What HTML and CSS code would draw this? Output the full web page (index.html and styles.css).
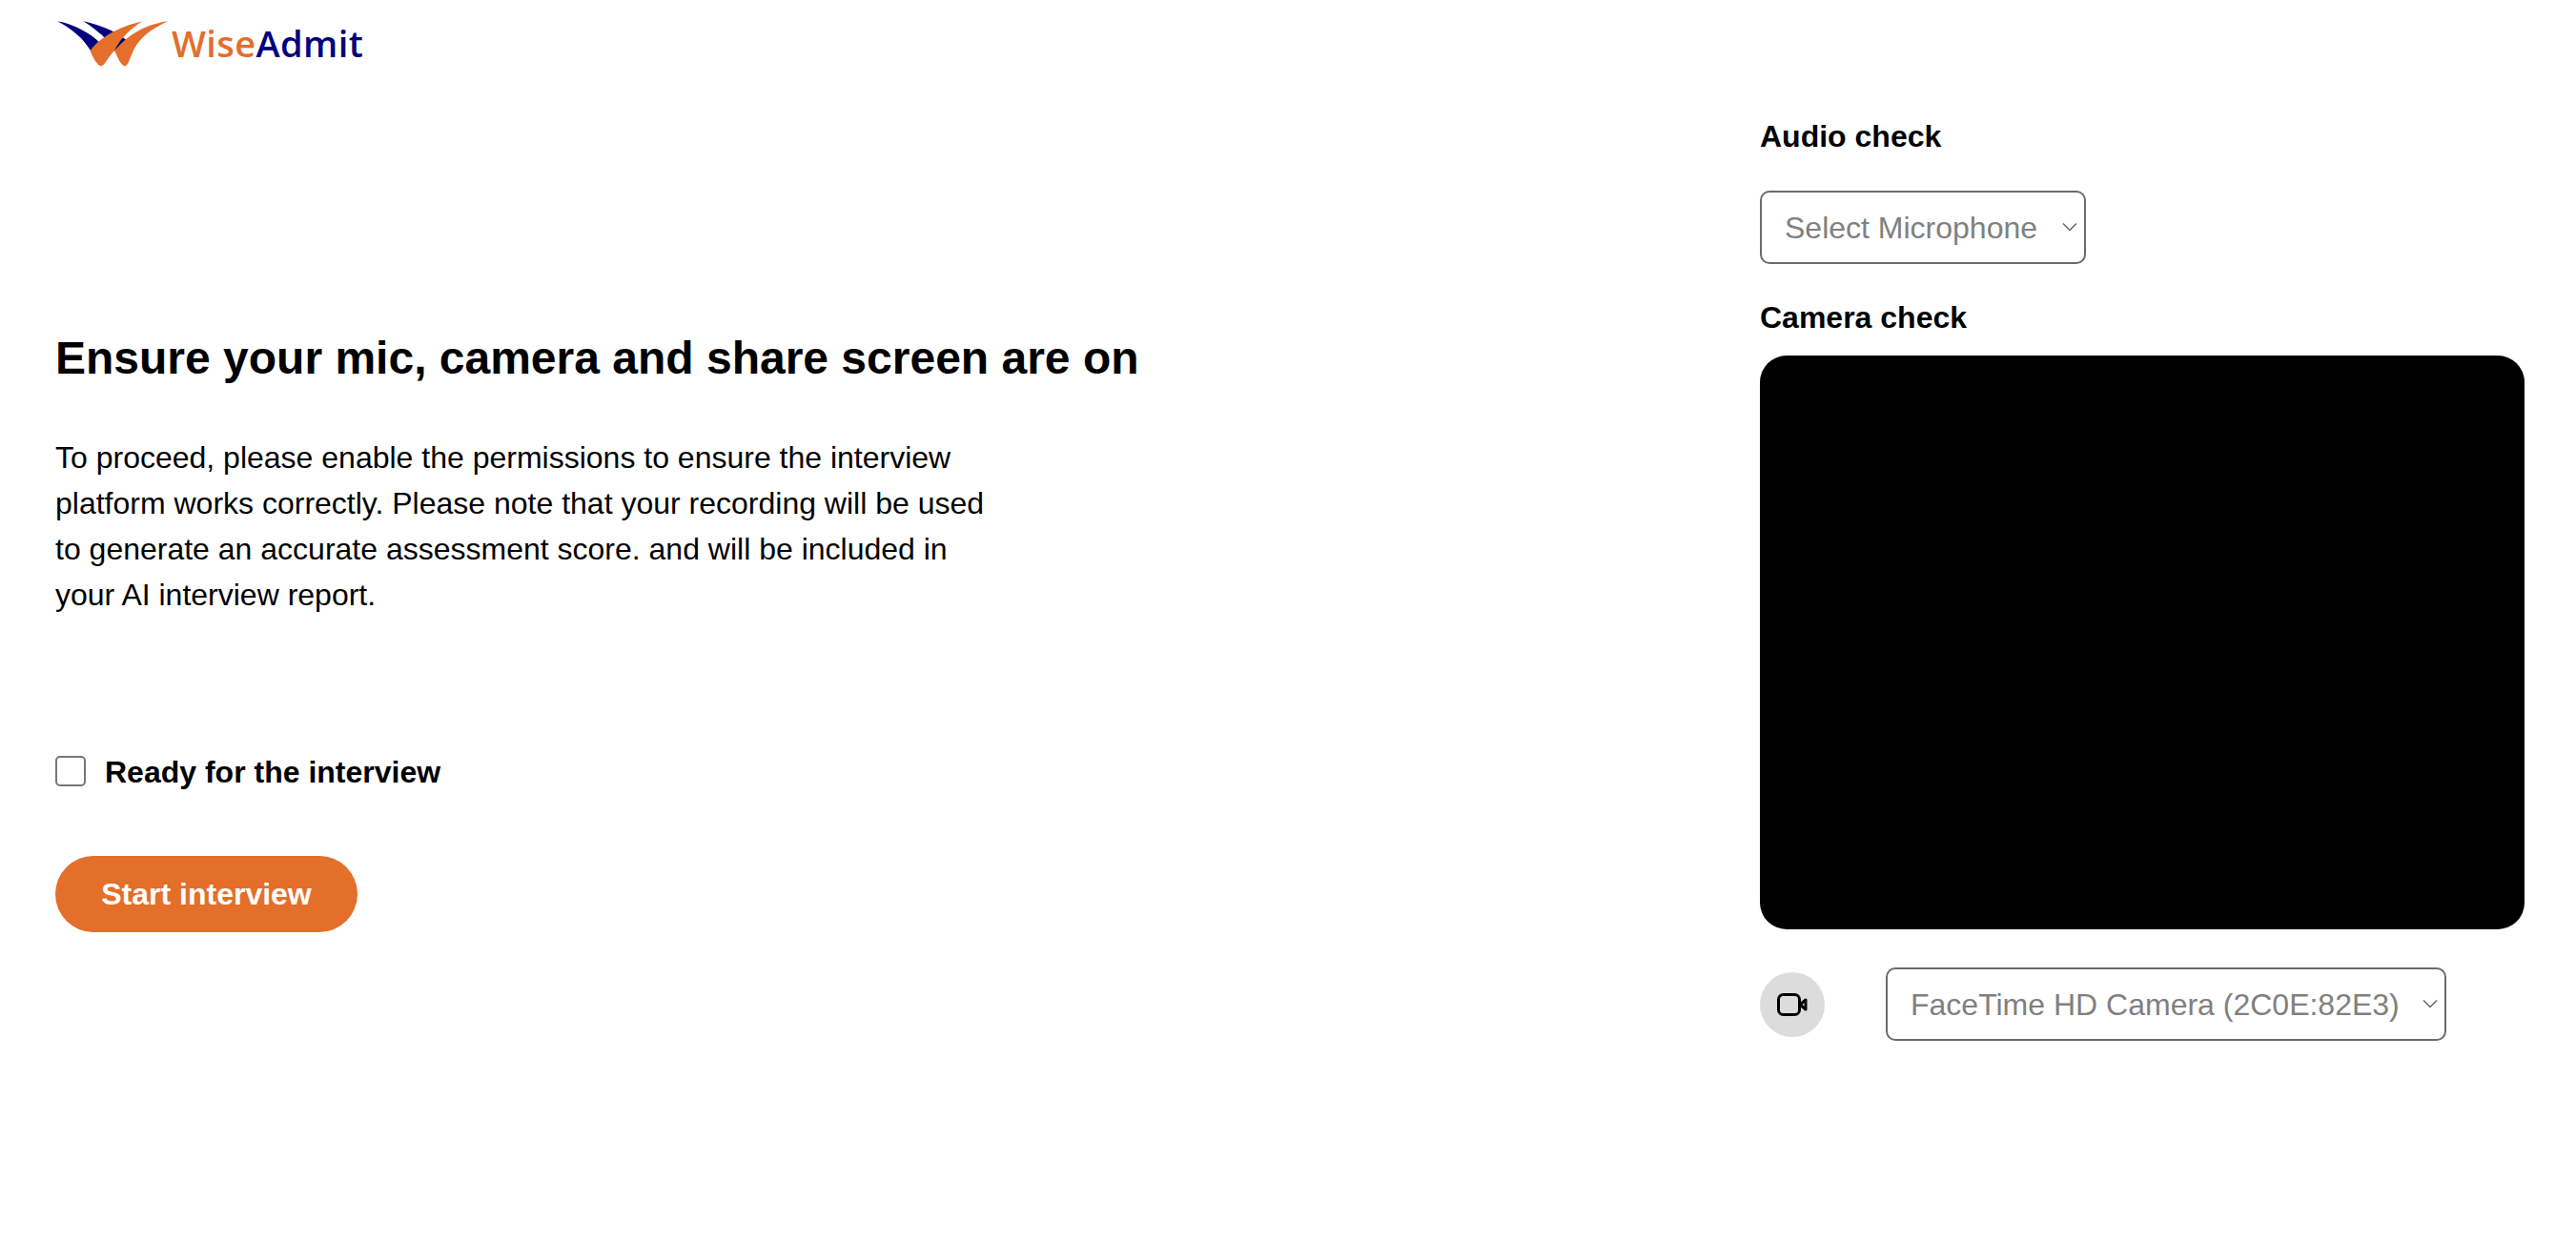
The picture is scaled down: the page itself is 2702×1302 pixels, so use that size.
FILE: index.html
```html
<!DOCTYPE html>
<html>
<head>
  <link rel="stylesheet" href="styles.css">
</head>
<body>
<header class="topbar">
  <div class="logo">
    <svg class="logo-mark" viewBox="60 60 350 150">
      <path fill="#000080" d="M60 67C110 75 165 105 197 137L165 160C140 120 105 90 60 67Z"/>
      <path fill="#000080" d="M142 67C190 78 240 95 278 127L240 160L215 125C195 105 170 85 142 67Z"/>
      <path fill="#e36f2b" d="M328 67C270 80 200 110 163 160C172 180 185 207 197 208C210 208 218 180 240 160C255 125 290 90 328 67Z"/>
      <path fill="#e36f2b" d="M408 67C350 75 290 100 240 160C250 180 260 207 272 208C285 208 290 170 310 140C335 105 370 85 408 67Z"/>
    </svg>
    <span class="logo-text"><span class="logo-wise">Wise</span><span class="logo-admit">Admit</span></span>
  </div>
</header>

<main class="page">
  <section class="intro">
    <h1>Ensure your mic, camera and share screen are on</h1>
    <p>To proceed, please enable the permissions to ensure the interview platform works correctly. Please note that your recording will be used to generate an accurate assessment score. and will be included in your AI interview report.</p>
    <label class="ready">
      <input type="checkbox">
      <span>Ready for the interview</span>
    </label>
    <button class="start">Start interview</button>
  </section>

  <section class="checks">
    <div class="check-title audio-title">Audio check</div>
    <div class="select-wrap mic-select">
      <select>
        <option>Select Microphone</option>
      </select>
      <svg class="chevron" viewBox="0 0 16 10"><path d="M1 1.5L8 8.5L15 1.5"/></svg>
    </div>
    <div class="check-title camera-title">Camera check</div>
    <div class="video"></div>
    <div class="camera-row">
      <div class="camera-btn">
        <svg viewBox="0 0 32 24"><rect x="1.5" y="1.5" width="22" height="21" rx="5"/><path d="M24 12L30 7V17Z"/></svg>
      </div>
      <div class="select-wrap camera-select">
        <select>
          <option>FaceTime HD Camera (2C0E:82E3)</option>
        </select>
        <svg class="chevron" viewBox="0 0 16 10"><path d="M1 1.5L8 8.5L15 1.5"/></svg>
      </div>
    </div>
  </section>
</main>
</body>
</html>
```

FILE: styles.css
```css
body {
  margin: 0;
  background: white;
  color: black;
  font-family: "Liberation Sans", Arial, sans-serif;
}

.topbar {
  height: 90px;
  padding-left: 60px;
}

.logo {
  display: flex;
  align-items: flex-start;
  padding-top: 20px;
  gap: 3px;
}

.logo-mark {
  width: 117px;
  height: 50px;
}

.logo-text {
  font-family: "Open Sans", sans-serif;
  font-size: 38px;
  line-height: 50px;
  font-weight: 600;
  letter-spacing: 0.4px;
}

.logo-wise {
  color: #e36f2b;
}

.logo-admit {
  color: #000080;
}

.page {
  display: flex;
  justify-content: space-between;
  padding: 0 54px 0 58px;
}

.intro {
  display: flex;
  flex-direction: column;
  align-items: flex-start;
  padding-top: 258px;
}

h1 {
  margin: 0;
  font-size: 48px;
  line-height: 56px;
}

.intro p {
  margin: 52px 0 0;
  width: 990px;
  font-size: 32px;
  line-height: 48px;
}

.ready {
  display: flex;
  align-items: flex-start;
  gap: 20px;
  margin-top: 145px;
  font-size: 32px;
  font-weight: bold;
  line-height: 35px;
}

.ready input {
  appearance: none;
  width: 32px;
  height: 32px;
  margin: 0;
  background: white;
  border: 2px solid #767676;
  border-radius: 5px;
}

.start {
  margin-top: 70px;
  height: 80px;
  width: 317px;
  padding: 0;
  border: none;
  border-radius: 40px;
  background: #e36f2b;
  color: white;
  font-family: inherit;
  font-size: 32px;
  font-weight: bold;
}

.checks {
  width: 802px;
  padding-top: 35px;
}

.check-title {
  font-size: 32px;
  font-weight: bold;
  line-height: 36px;
}

.audio-title {
  margin-bottom: 39px;
}

.camera-title {
  margin: 38px 0 22px;
}

.select-wrap {
  position: relative;
  height: 77px;
}

.select-wrap select {
  appearance: none;
  width: 100%;
  height: 100%;
  padding: 0 0 0 24px;
  background: white;
  border: 2px solid #6b6b6b;
  border-radius: 10px;
  color: #808080;
  font-family: inherit;
  font-size: 32px;
}

.chevron {
  position: absolute;
  top: 33px;
  right: 9px;
  width: 16px;
  height: 10px;
  fill: none;
  stroke: #666;
  stroke-width: 1.5;
}

.mic-select {
  width: 342px;
}

.video {
  height: 602px;
  background: black;
  border-radius: 28px;
}

.camera-row {
  display: flex;
  align-items: center;
  gap: 64px;
  margin-top: 40px;
}

.camera-btn {
  display: flex;
  align-items: center;
  justify-content: center;
  width: 68px;
  height: 68px;
  border-radius: 50%;
  background: #dcdcdc;
}

.camera-btn svg {
  width: 32px;
  height: 24px;
  fill: none;
  stroke: black;
  stroke-width: 3;
  stroke-linejoin: round;
}

.camera-select {
  width: 588px;
}
```
